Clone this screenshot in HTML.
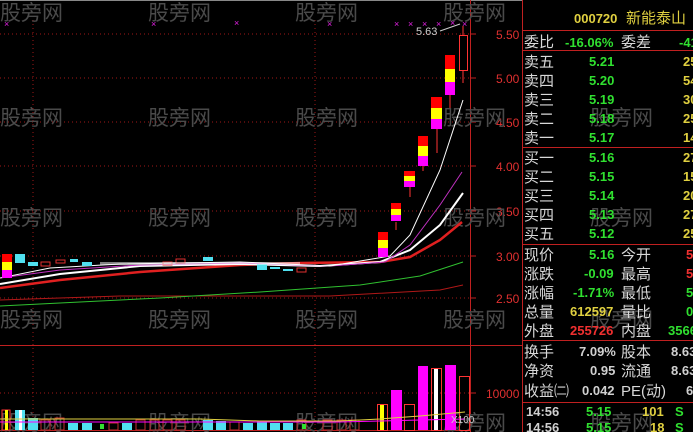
<!DOCTYPE html><html><head><meta charset="utf-8"><style>
body{margin:0;background:#000;width:693px;height:432px;overflow:hidden;font-family:"Liberation Sans","Noto Sans CJK SC",sans-serif}
svg{display:block}
.wm{fill:#4a4a4a;font-size:21px;font-family:"Noto Sans CJK SC",sans-serif}
.ax{fill:#e03030;font-size:12px;font-family:"Liberation Sans",sans-serif}
.lb{fill:#d8d8d8;font-size:15px;font-family:"Noto Sans CJK SC",sans-serif}
.g{fill:#30e030;font-weight:bold;font-size:13px;font-family:"Liberation Sans",sans-serif}
.y{fill:#e0d040;font-weight:bold;font-size:13px;font-family:"Liberation Sans",sans-serif}
.r{fill:#f03030;font-weight:bold;font-size:13px;font-family:"Liberation Sans",sans-serif}
.w{fill:#d0d0d0;font-weight:bold;font-size:13px;font-family:"Liberation Sans",sans-serif}
</style></head><body>
<svg width="693" height="432" viewBox="0 0 693 432">
<rect width="693" height="432" fill="#000"/>
<line x1="0" y1="0.5" x2="522" y2="0.5" stroke="#888"/>
<!-- grid -->
<g stroke="#a01818" stroke-dasharray="1,3">
<line x1="0" y1="34" x2="470" y2="34"/><line x1="0" y1="78" x2="470" y2="78"/><line x1="0" y1="122" x2="470" y2="122"/><line x1="0" y1="166" x2="470" y2="166"/><line x1="0" y1="211" x2="470" y2="211"/><line x1="0" y1="256" x2="470" y2="256"/><line x1="0" y1="298" x2="470" y2="298"/>
<line x1="33" y1="20" x2="33" y2="432"/><line x1="315" y1="20" x2="315" y2="432"/>
<line x1="0" y1="393" x2="470" y2="393"/>
</g>
<line x1="470.5" y1="0" x2="470.5" y2="432" stroke="#c02020"/>
<line x1="522.5" y1="0" x2="522.5" y2="432" stroke="#c02020"/>
<line x1="0" y1="345.5" x2="522" y2="345.5" stroke="#c02020"/>
<line x1="0" y1="430.5" x2="470" y2="430.5" stroke="#c02020"/>
<!-- axis ticks -->
<g stroke="#c02020"><line x1="470" y1="34" x2="476" y2="34"/><line x1="470" y1="78" x2="476" y2="78"/><line x1="470" y1="122" x2="476" y2="122"/><line x1="470" y1="166" x2="476" y2="166"/><line x1="470" y1="211" x2="476" y2="211"/><line x1="470" y1="256" x2="476" y2="256"/><line x1="470" y1="298" x2="476" y2="298"/><line x1="470" y1="393" x2="476" y2="393"/></g>
<text class="ax" x="496" y="39">5.50</text><text class="ax" x="496" y="83">5.00</text><text class="ax" x="496" y="127">4.50</text><text class="ax" x="496" y="171">4.00</text><text class="ax" x="496" y="216">3.50</text><text class="ax" x="496" y="261">3.00</text><text class="ax" x="496" y="303">2.50</text><text class="ax" x="486" y="398">10000</text>
<!-- watermarks -->
<g class="wm"><text x="0" y="20">股旁网</text><text x="148" y="20">股旁网</text><text x="295" y="20">股旁网</text><text x="443" y="20">股旁网</text>
<text x="0" y="125">股旁网</text><text x="148" y="125">股旁网</text><text x="295" y="125">股旁网</text><text x="443" y="125">股旁网</text><text x="590" y="125">股旁网</text>
<text x="0" y="225">股旁网</text><text x="148" y="225">股旁网</text><text x="295" y="225">股旁网</text><text x="443" y="225">股旁网</text><text x="590" y="225">股旁网</text>
<text x="0" y="327">股旁网</text><text x="148" y="327">股旁网</text><text x="295" y="327">股旁网</text><text x="443" y="327">股旁网</text><text x="590" y="327">股旁网</text>
<text x="0" y="430">股旁网</text><text x="148" y="430">股旁网</text><text x="295" y="430">股旁网</text><text x="443" y="430">股旁网</text><text x="590" y="430">股旁网</text></g>
<!-- markers -->
<g fill="#e020e0" font-size="9"><text x="4" y="27">×</text><text x="151" y="27">×</text><text x="234" y="26">×</text><text x="327" y="27">×</text><text x="394" y="27">×</text><text x="408" y="27">×</text><text x="422" y="27">×</text><text x="436" y="27">×</text><text x="450" y="26">×</text><text x="462" y="27">×</text></g>
<text x="416" y="35" fill="#ccc" font-size="11">5.63</text>
<path d="M440 31 L460 24" stroke="#ccc"/>
<!-- MAs -->
<path d="M0 300 L120 296 L330 296 L440 290 L463 285" stroke="#b01818" fill="none"/>
<path d="M0 306 L80 302 L160 298 L260 292 L360 285 L420 276 L463 262" stroke="#30c030" fill="none"/>
<path d="M0 288 L60 280 L140 272 L240 265 L300 263 L380 262 L410 257 L440 240 L462 222" stroke="#e02020" stroke-width="2.5" fill="none"/>
<path d="M0 284 L60 274 L140 266 L240 264 L320 266 L380 262 L410 250 L440 225 L463 193" stroke="#fff" stroke-width="2" fill="none"/>
<path d="M0 278 L60 270 L140 265 L240 263 L330 266 L385 262 L410 245 L440 205 L462 172" stroke="#c030c0" fill="none"/>
<path d="M0 278 L50 268 L120 264 L240 262 L330 266 L390 256 L410 235 L440 170 L463 100" stroke="#fff" fill="none"/>
<!-- small candles -->
<g fill="#50e0f0"><rect x="15" y="254" width="10" height="9"/><rect x="28" y="262" width="10" height="4"/><rect x="70" y="259" width="8" height="3"/><rect x="82" y="262" width="10" height="4"/><rect x="203" y="257" width="10" height="4"/><rect x="257" y="264" width="10" height="6"/><rect x="270" y="267" width="10" height="2"/><rect x="283" y="269" width="10" height="2"/></g>
<g fill="none" stroke="#e03030"><rect x="41" y="262" width="9" height="4"/><rect x="56" y="260" width="9" height="3"/><rect x="176" y="259" width="9" height="4"/><rect x="297" y="268" width="9" height="4"/><rect x="163" y="262" width="9" height="3"/></g>
<g fill="#fff"><rect x="100" y="262" width="200" height="3" opacity="0.5"/></g>
<!-- big colored candles -->
<g>
<rect x="2" y="254" width="10" height="8" fill="#f00"/><rect x="2" y="262" width="10" height="8" fill="#ff0"/><rect x="2" y="270" width="10" height="8" fill="#f0f"/>
<rect x="378" y="232" width="10" height="8" fill="#f00"/><rect x="378" y="240" width="10" height="8" fill="#ff0"/><rect x="378" y="248" width="10" height="9" fill="#f0f"/>
<line x1="396" y1="222" x2="396" y2="230" stroke="#f33"/>
<rect x="391" y="203" width="10" height="6" fill="#f00"/><rect x="391" y="209" width="10" height="6" fill="#ff0"/><rect x="391" y="215" width="10" height="6" fill="#f0f"/>
<line x1="410" y1="187" x2="410" y2="197" stroke="#f33"/>
<rect x="404" y="171" width="11" height="5" fill="#f00"/><rect x="404" y="176" width="11" height="5" fill="#ff0"/><rect x="404" y="181" width="11" height="6" fill="#f0f"/>
<line x1="423" y1="165" x2="423" y2="171" stroke="#f33"/>
<rect x="418" y="136" width="10" height="10" fill="#f00"/><rect x="418" y="146" width="10" height="10" fill="#ff0"/><rect x="418" y="156" width="10" height="10" fill="#f0f"/>
<line x1="437" y1="128" x2="437" y2="153" stroke="#f33"/>
<rect x="431" y="97" width="11" height="11" fill="#f00"/><rect x="431" y="108" width="11" height="11" fill="#ff0"/><rect x="431" y="119" width="11" height="10" fill="#f0f"/>
<line x1="450" y1="95" x2="450" y2="108" stroke="#f33"/>
<rect x="445" y="55" width="10" height="14" fill="#f00"/><rect x="445" y="69" width="10" height="13" fill="#ff0"/><rect x="445" y="82" width="10" height="13" fill="#f0f"/>
<line x1="463" y1="26" x2="463" y2="83" stroke="#f33"/>
<rect x="459.5" y="35.5" width="8" height="35" fill="#000" stroke="#f33"/>
</g>
<!-- volume -->
<g>
<rect x="2" y="410" width="8" height="20" fill="none" stroke="#f33"/><rect x="5" y="410" width="3" height="20" fill="#ff0"/>
<rect x="15" y="410" width="10" height="20" fill="#50e0f0"/><rect x="19" y="410" width="3" height="20" fill="#fff"/>
<rect x="28" y="418" width="10" height="12" fill="#50e0f0"/>
<g fill="#50e0f0"><rect x="68" y="423" width="10" height="7"/><rect x="82" y="423" width="10" height="7"/><rect x="122" y="423" width="10" height="7"/><rect x="203" y="420" width="10" height="10"/><rect x="216" y="421" width="10" height="9"/><rect x="243" y="423" width="10" height="7"/><rect x="257" y="421" width="10" height="9"/><rect x="270" y="423" width="10" height="7"/><rect x="283" y="423" width="10" height="7"/></g>
<g fill="none" stroke="#c03030"><rect x="41" y="420" width="9" height="10"/><rect x="55" y="418" width="9" height="12"/><rect x="109" y="423" width="9" height="7"/><rect x="136" y="420" width="9" height="10"/><rect x="150" y="420" width="9" height="10"/><rect x="163" y="420" width="9" height="10"/><rect x="176" y="420" width="9" height="10"/><rect x="230" y="422" width="9" height="8"/><rect x="297" y="420" width="9" height="10"/><rect x="323" y="420" width="9" height="10"/><rect x="337" y="420" width="9" height="10"/><rect x="350" y="420" width="9" height="10"/></g>
<rect x="100" y="424" width="4" height="5" fill="#30e030"/><rect x="302" y="424" width="4" height="5" fill="#30e030"/>
<rect x="377.5" y="404.5" width="10" height="26" fill="none" stroke="#f33"/><rect x="380" y="405" width="4" height="25" fill="#ff0"/>
<rect x="391" y="390" width="11" height="40" fill="#f0f"/>
<rect x="404.5" y="404.5" width="10" height="26" fill="none" stroke="#f33"/>
<rect x="418" y="366" width="10" height="64" fill="#f0f"/>
<rect x="431.5" y="368.5" width="10" height="62" fill="none" stroke="#f33"/><rect x="434" y="369" width="4" height="61" fill="#fff"/>
<rect x="445" y="365" width="11" height="65" fill="#f0f"/>
<rect x="459.5" y="376.5" width="10" height="54" fill="none" stroke="#f33"/>
<path d="M0 419 L200 419 L260 421 L340 421 L380 419 L420 416 L465 412" stroke="#e0d040" fill="none"/>
<path d="M0 422 L200 422 L340 422 L380 421 L420 420 L465 419" stroke="#f0f" fill="none"/>
<text x="451" y="423" fill="#ccc" font-size="10">X100</text>
</g>
<!-- right panel -->
<g stroke="#c02020"><line x1="522" y1="30.5" x2="693" y2="30.5"/><line x1="522" y1="50.5" x2="693" y2="50.5"/><line x1="522" y1="147.5" x2="693" y2="147.5"/><line x1="522" y1="244.5" x2="693" y2="244.5"/><line x1="522" y1="340.5" x2="693" y2="340.5"/><line x1="522" y1="402.5" x2="693" y2="402.5"/></g>
<text x="574" y="23" class="y" font-size="14">000720</text><text x="626" y="23" fill="#e0d040" font-size="15" font-family="Noto Sans CJK SC">新能泰山</text>
<text class="lb" x="524" y="47">委比</text><text class="g" x="565" y="47">-16.06%</text><text class="lb" x="621" y="47">委差</text><text class="g" x="679" y="47">-41</text>
<g class="lb"><text x="524" y="67">卖五</text><text x="524" y="86">卖四</text><text x="524" y="105">卖三</text><text x="524" y="124">卖二</text><text x="524" y="143">卖一</text>
<text x="524" y="163">买一</text><text x="524" y="182">买二</text><text x="524" y="201">买三</text><text x="524" y="220">买四</text><text x="524" y="239">买五</text></g>
<g class="g"><text x="589" y="66">5.21</text><text x="589" y="85">5.20</text><text x="589" y="104">5.19</text><text x="589" y="123">5.18</text><text x="589" y="142">5.17</text>
<text x="589" y="162">5.16</text><text x="589" y="181">5.15</text><text x="589" y="200">5.14</text><text x="589" y="219">5.13</text><text x="589" y="238">5.12</text></g>
<g class="y"><text x="683" y="66">25</text><text x="683" y="85">54</text><text x="683" y="104">30</text><text x="683" y="123">25</text><text x="683" y="142">14</text>
<text x="683" y="162">27</text><text x="683" y="181">15</text><text x="683" y="200">20</text><text x="683" y="219">27</text><text x="683" y="238">25</text></g>
<g class="lb"><text x="524" y="260">现价</text><text x="524" y="279">涨跌</text><text x="524" y="298">涨幅</text><text x="524" y="317">总量</text><text x="524" y="336">外盘</text>
<text x="621" y="260">今开</text><text x="621" y="279">最高</text><text x="621" y="298">最低</text><text x="621" y="317">量比</text><text x="621" y="336">内盘</text>
<text x="524" y="357">换手</text><text x="524" y="376">净资</text><text x="524" y="396">收益㈡</text><text x="621" y="357">股本</text><text x="621" y="376">流通</text><text x="621" y="396" font-family="Liberation Sans">PE(动)</text></g>
<text class="g" x="589" y="259">5.16</text><text class="g" x="584" y="278">-0.09</text><text class="g" x="573" y="297">-1.71%</text><text class="y" x="570" y="316">612597</text><text class="r" x="570" y="335">255726</text>
<text class="r" x="686" y="259">5</text><text class="r" x="686" y="278">5</text><text class="g" x="686" y="297">5</text><text class="g" x="686" y="316">0</text><text class="g" x="668" y="335">3566</text>
<text class="w" x="579" y="356">7.09%</text><text class="w" x="590" y="375">0.95</text><text class="w" x="582" y="395">0.042</text>
<text class="w" x="671" y="356">8.63</text><text class="w" x="671" y="375">8.63</text><text class="w" x="686" y="395">6</text>
<text class="w" x="526" y="416">14:56</text><text class="g" x="586" y="416">5.15</text><text class="y" x="642" y="416">101</text><text class="g" x="675" y="416">S</text>
<text class="w" x="526" y="432">14:56</text><text class="g" x="586" y="432">5.15</text><text class="y" x="650" y="432">18</text><text class="g" x="675" y="432">S</text>
</svg>
</body></html>
